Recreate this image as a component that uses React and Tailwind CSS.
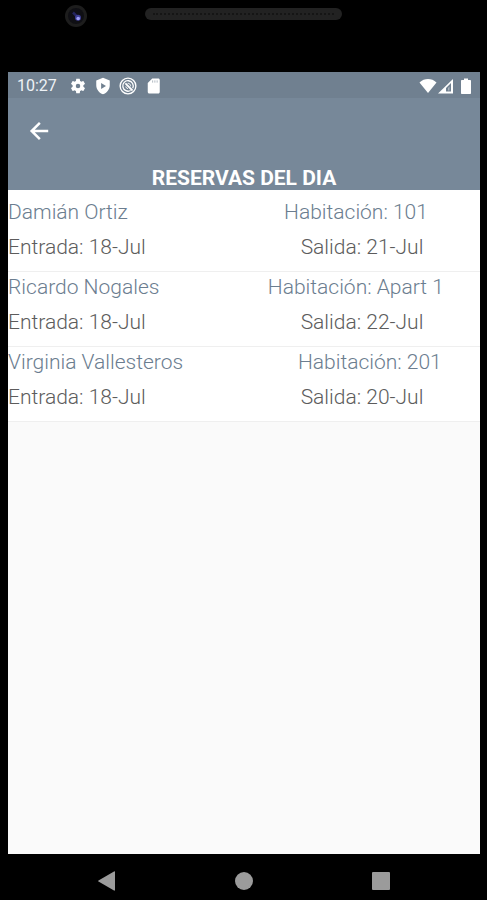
import React from "react";

const reservas = [
  {
    nombre: "Damián Ortiz",
    habitacion: "101",
    entrada: "18-Jul",
    salida: "21-Jul",
  },
  {
    nombre: "Ricardo Nogales",
    habitacion: "Apart 1",
    entrada: "18-Jul",
    salida: "22-Jul",
  },
  {
    nombre: "Virginia Vallesteros",
    habitacion: "201",
    entrada: "18-Jul",
    salida: "20-Jul",
  },
];

const App = () => {
  return (
    <div className="min-h-screen flex flex-col bg-black font-[Roboto,sans-serif]">
      <PhoneTop />
      <main className="flex-1 flex flex-col ml-2 mr-[7px] bg-[#fafafa]">
        <StatusBar />
        <Header />
        <ul className="bg-white pt-[7px]">
          {reservas.map((reserva) => (
            <Reserva key={reserva.nombre} {...reserva} />
          ))}
        </ul>
      </main>
      <NavigationBar />
    </div>
  );
};

const PhoneTop = () => {
  return (
    <div className="h-[72px] pt-[5px] grid grid-cols-[1fr_2fr_1fr] items-start">
      {/* Camera */}
      <svg viewBox="0 0 22 22" className="size-[22px] justify-self-end mr-[35px]">
        <circle cx="11" cy="11" r="11" fill="#1d1d1d" />
        <circle cx="11" cy="11" r="8" fill="#0f0f14" />
        <path d="M8 7.5l4 4" stroke="#24245c" strokeWidth="2.5" />
        <circle cx="13" cy="12.8" r="3" fill="#3d3d94" />
        <circle cx="13.2" cy="13.5" r="1.8" fill="#9d9df2" />
      </svg>
      {/* Speaker */}
      <div className="mt-[3px] h-3 w-[197px] px-2 rounded-full bg-[#222222] justify-self-center flex items-center">
        <div className="w-full border-t-2 border-dotted border-[#151515]" />
      </div>
    </div>
  );
};

const StatusBar = () => {
  return (
    <div className="h-[26px] flex items-center justify-between bg-[#708090] text-white pl-[9px] pr-[5px] pt-0.5">
      <div className="flex items-center">
        <span className="text-base leading-6 w-[52px] text-[#eef2f6]">10:27</span>
        <div className="flex items-center gap-[7px]">
          <svg viewBox="0 0 24 24" fill="currentColor" className="size-[18px]">
            <path d="M19.14 12.94c.04-.3.06-.61.06-.94 0-.32-.02-.64-.07-.94l2.03-1.58a.49.49 0 0 0 .12-.61l-1.92-3.32a.49.49 0 0 0-.59-.22l-2.39.96c-.5-.38-1.03-.7-1.62-.94l-.36-2.54a.48.48 0 0 0-.48-.41h-3.84c-.24 0-.43.17-.47.41l-.36 2.54c-.59.24-1.13.57-1.62.94l-2.39-.96a.48.48 0 0 0-.59.22L2.74 8.87c-.12.21-.08.47.12.61l2.03 1.58c-.05.3-.09.63-.09.94s.02.64.07.94l-2.03 1.58a.49.49 0 0 0-.12.61l1.92 3.32c.12.22.37.29.59.22l2.39-.96c.5.38 1.03.7 1.62.94l.36 2.54c.05.24.24.41.48.41h3.84c.24 0 .44-.17.47-.41l.36-2.54c.59-.24 1.13-.56 1.62-.94l2.39.96c.22.08.47 0 .59-.22l1.92-3.32a.49.49 0 0 0-.12-.61zM12 15a3 3 0 1 1 0-6 3 3 0 0 1 0 6z" />
          </svg>
          <svg viewBox="0 0 24 24" fill="currentColor" className="size-[18px]">
            <path
              fillRule="evenodd"
              d="M12 1 3 4.5V11c0 5.5 3.8 10.4 9 12 5.2-1.6 9-6.5 9-12V4.5zM9.5 8l6.5 4-6.5 4z"
            />
          </svg>
          <svg
            viewBox="0 0 24 24"
            fill="none"
            stroke="currentColor"
            strokeWidth="1.8"
            className="size-[18px]"
          >
            <circle cx="12" cy="12" r="10.5" />
            <path d="M15.5 18a7 7 0 1 1 2.8-3" />
            <path d="M8.5 8.5l9.5 9.5" strokeWidth="2.4" />
            <path
              d="M9 12.5a3.5 3.5 0 0 0 3 3M11.5 8.5a3.5 3.5 0 0 1 4 4"
              strokeWidth="1.2"
            />
          </svg>
          <svg viewBox="0 0 24 24" fill="currentColor" className="size-[18px]">
            <path d="M19 2h-8L5 8v12c0 1.1.9 2 2 2h12c1.1 0 2-.9 2-2V4c0-1.1-.9-2-2-2z" />
            <path
              d="M11.5 4.5v3M14.5 4.5v3M17.5 4.5v3"
              stroke="#a9b3bd"
              strokeWidth="1.2"
            />
          </svg>
        </div>
      </div>
      <div className="flex items-center">
        <svg viewBox="0 0 18 18" fill="currentColor" className="size-[18px]">
          <path d="M9 16 .5 5.5C3 3 6 2 9 2s6 1 8.5 3.5z" />
        </svg>
        <svg viewBox="0 0 18 18" fill="currentColor" className="size-[18px]">
          <path
            fillRule="evenodd"
            d="M1 16.5 16 2v14.5zM9 14.5h5V6l-5 5z"
          />
          <path d="M11 11l1.5-1.5v4H11z" opacity=".4" />
        </svg>
        <svg viewBox="0 0 18 18" fill="currentColor" className="size-[18px] ml-0.5">
          <path d="M7 1.5h4V3h2c.6 0 1 .4 1 1v12c0 .6-.4 1-1 1H5c-.6 0-1-.4-1-1V4c0-.6.4-1 1-1h2z" />
        </svg>
      </div>
    </div>
  );
};

const Header = () => {
  return (
    <header className="bg-[#778899] text-white">
      <div className="h-[68px] flex items-center pl-[18px] pb-0.5">
        <button type="button" aria-label="Volver" className="cursor-pointer">
          <svg viewBox="0 0 24 24" fill="currentColor" className="size-[26px]">
            <path d="M20.5 10.8v2.4H8.1l5.5 5.5L12 20.4 3.6 12 12 3.6l1.6 1.7-5.5 5.5z" />
          </svg>
        </button>
      </div>
      <h1 className="text-center text-[21px] leading-6 font-bold">
        RESERVAS DEL DIA
      </h1>
    </header>
  );
};

const Reserva = ({ nombre, habitacion, entrada, salida }) => {
  return (
    <li className="text-[21px] font-light pb-1 border-b border-[#efefef]">
      <div className="flex leading-[30px] text-[#6b7d8f]">
        <p className="flex-auto">{nombre}</p>
        <p className="flex-auto text-center">Habitación: {habitacion}</p>
      </div>
      <div className="flex leading-10 text-[#5c5c5c]">
        <p className="flex-1">Entrada: {entrada}</p>
        <p className="flex-1 text-center">Salida: {salida}</p>
      </div>
    </li>
  );
};

const NavigationBar = () => {
  return (
    <nav className="h-[46px] pt-2 px-[38px] grid grid-cols-3 items-center justify-items-center text-[#9b9b9b]">
      <button type="button" aria-label="Atrás" className="cursor-pointer">
        <svg viewBox="0 0 20 20" fill="currentColor" className="size-5">
          <path d="M18 1v18c0 .6-.5.8-1 .5L1.5 10.6c-.5-.3-.5-.9 0-1.2L17 .5c.5-.3 1-.1 1 .5z" />
        </svg>
      </button>
      <button type="button" aria-label="Inicio" className="cursor-pointer">
        <svg viewBox="0 0 20 20" fill="currentColor" className="size-5">
          <circle cx="10" cy="10" r="9" />
        </svg>
      </button>
      <button type="button" aria-label="Recientes" className="cursor-pointer">
        <svg viewBox="0 0 20 20" fill="currentColor" className="size-5">
          <rect x="1" y="1" width="18" height="18" rx="1" />
        </svg>
      </button>
    </nav>
  );
};

export default App;
